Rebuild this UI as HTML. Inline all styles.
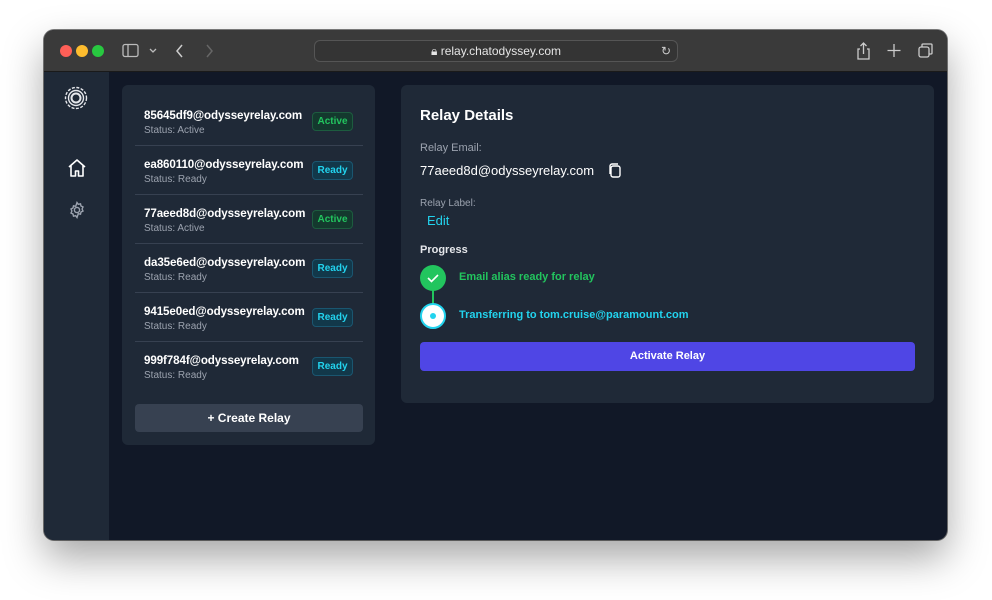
<!DOCTYPE html>
<html><head><meta charset="utf-8"><style>
*{box-sizing:border-box;margin:0;padding:0}
body{width:992px;height:600px;background:#fff;font-family:"Liberation Sans",Arial,sans-serif;position:relative;overflow:hidden}
.win{position:absolute;left:44px;top:30px;width:903px;height:510px;border-radius:10px;overflow:hidden;background:#111827;box-shadow:0 18px 40px rgba(0,0,0,.35),0 0 0 1px rgba(0,0,0,.5)}
.tb{position:absolute;left:0;top:0;width:903px;height:42px;background:#3a3a3a;border-bottom:1px solid #1a1a1a}
.dot{position:absolute;top:15px;width:12px;height:12px;border-radius:50%}
.url{position:absolute;left:270px;top:10px;width:364px;height:22px;border:1px solid #555;border-radius:6px;background:#343434;color:#e5e5e5;font-size:12px;text-align:center;line-height:21px}
.side{position:absolute;left:0;top:42px;width:65px;height:468px;background:#1f2937}
.card{position:absolute;background:#1f2937;border-radius:6px}
.row{position:absolute;left:13px;width:228px;height:49px;border-bottom:1px solid #374151}
.em{position:absolute;left:9px;top:12px;color:#fff;font-weight:bold;font-size:11.6px;letter-spacing:-0.1px}
.st{position:absolute;left:9px;top:28px;color:#9ca3af;font-size:10px}
.bd{position:absolute;left:177px;top:15px;width:41px;height:19px;border-radius:4px;font-size:10px;font-weight:bold;text-align:center;line-height:17px}
.ac{background:#14392e;border:1px solid #1d5c3f;color:#22c55e}
.rd{background:#12384a;border:1px solid #1a5670;color:#22d3ee}
.t{position:absolute;white-space:nowrap}
</style></head><body>
<div class="win">
 <div class="tb">
  <div class="dot" style="left:16px;background:#fe5f57"></div>
  <div class="dot" style="left:32px;background:#febc2e"></div>
  <div class="dot" style="left:48px;background:#28c840"></div>
  <svg style="position:absolute;left:78px;top:13px" width="40" height="16" fill="none" stroke="#bbb" stroke-width="1.3"><rect x="1" y="1.5" width="15" height="12" rx="2"/><line x1="6" y1="2" x2="6" y2="13"/><path d="M28 6l3 3 3-3"/></svg>
  <svg style="position:absolute;left:130px;top:13px" width="40" height="16" fill="none" stroke-width="1.5"><path d="M8 2l-5 6 5 6" stroke="#ccc"/><path d="M33 2l5 6-5 6" stroke="#666"/></svg>
  <div class="url">🔒︎ relay.chatodyssey.com<span style="position:absolute;right:6px;color:#ccc">↻</span></div>
  <svg style="position:absolute;left:812px;top:11px" width="80" height="20" fill="none" stroke="#ccc" stroke-width="1.3"><path d="M4 8H2v10h11V8h-2M7.5 13V2M4.5 5l3-3 3 3"/><path d="M38 3v13M31.5 9.5h13"/><rect x="63" y="6" width="10" height="10" rx="2"/><path d="M66 6V4a1 1 0 011-1h8a1 1 0 011 1v8a1 1 0 01-1 1h-2"/></svg>
 </div>
 <div class="side">
  <svg style="position:absolute;left:20px;top:14px" width="26" height="26" fill="none" stroke="#e5e7eb" stroke-width="1.4"><circle cx="12" cy="12" r="10.5" stroke-dasharray="3 1.5"/><circle cx="12" cy="12" r="7.5"/><circle cx="12" cy="12" r="4.5" stroke-width="2"/></svg>
  <svg style="position:absolute;left:23px;top:86px" width="20" height="20" fill="none" stroke="#fff" stroke-width="1.6" stroke-linejoin="round"><path d="M2 9l8-7 8 7M4 7.5V18h4.5v-5h3v5H16V7.5"/></svg>
  <svg style="position:absolute;left:24px;top:129px" width="18" height="18" fill="none" stroke="#9ca3af" stroke-width="1.4"><circle cx="9" cy="9" r="2.6"/><path d="M9 1.5l1.3 1.8 2.2-.5.5 2.2 2 1-.9 2 .9 2-2 1-.5 2.2-2.2-.5L9 16.5l-1.3-1.8-2.2.5-.5-2.2-2-1 .9-2-.9-2 2-1 .5-2.2 2.2.5z"/></svg>
 </div>
 <div class="card" style="left:78px;top:55px;width:253px;height:360px">
  <div class="row" style="top:12px"><div class="em">85645df9@odysseyrelay.com</div><div class="st">Status: Active</div><div class="bd ac">Active</div></div>
  <div class="row" style="top:61px"><div class="em">ea860110@odysseyrelay.com</div><div class="st">Status: Ready</div><div class="bd rd">Ready</div></div>
  <div class="row" style="top:110px"><div class="em">77aeed8d@odysseyrelay.com</div><div class="st">Status: Active</div><div class="bd ac">Active</div></div>
  <div class="row" style="top:159px"><div class="em">da35e6ed@odysseyrelay.com</div><div class="st">Status: Ready</div><div class="bd rd">Ready</div></div>
  <div class="row" style="top:208px"><div class="em">9415e0ed@odysseyrelay.com</div><div class="st">Status: Ready</div><div class="bd rd">Ready</div></div>
  <div class="row" style="top:257px;border-bottom:none"><div class="em">999f784f@odysseyrelay.com</div><div class="st">Status: Ready</div><div class="bd rd">Ready</div></div>
  <div style="position:absolute;left:13px;top:319px;width:228px;height:28px;background:#374151;border-radius:4px;color:#fff;font-weight:bold;font-size:12px;text-align:center;line-height:28px">+ Create Relay</div>
 </div>
 <div class="card" style="left:357px;top:55px;width:533px;height:318px">
  <div class="t" style="left:19px;top:22px;color:#fff;font-weight:bold;font-size:15px">Relay Details</div>
  <div class="t" style="left:19px;top:57px;color:#9ca3af;font-size:11px">Relay Email:</div>
  <div class="t" style="left:19px;top:78px;color:#fff;font-size:13px">77aeed8d@odysseyrelay.com</div>
  <svg style="position:absolute;left:207px;top:78px" width="14" height="16" fill="none" stroke="#fff" stroke-width="1.4"><rect x="3" y="3" width="9" height="11" rx="2"/><path d="M2 11V3a2 2 0 012-2h6"/></svg>
  <div class="t" style="left:19px;top:113px;color:#9ca3af;font-size:10px">Relay Label:</div>
  <div class="t" style="left:26px;top:128px;color:#22d3ee;font-size:13px">Edit</div>
  <div class="t" style="left:19px;top:159px;color:#e5e7eb;font-weight:bold;font-size:11px">Progress</div>
  <div style="position:absolute;left:31px;top:200px;width:2px;height:20px;background:#22c55e"></div>
  <div style="position:absolute;left:19px;top:180px;width:26px;height:26px;border-radius:50%;background:#22c55e"></div>
  <svg style="position:absolute;left:19px;top:180px" width="26" height="26" fill="none" stroke="#fff" stroke-width="1.6"><path d="M8 13l3.5 3.5L18 10"/></svg>
  <div class="t" style="left:58px;top:186px;color:#22c55e;font-weight:bold;font-size:11px">Email alias ready for relay</div>
  <div style="position:absolute;left:19px;top:218px;width:26px;height:26px;border-radius:50%;background:#fff;border:2px solid #22d3ee"></div>
  <div style="position:absolute;left:29px;top:228px;width:6px;height:6px;border-radius:50%;background:#22d3ee"></div>
  <div class="t" style="left:58px;top:224px;color:#22d3ee;font-weight:bold;font-size:11px">Transferring to tom.cruise@paramount.com</div>
  <div style="position:absolute;left:19px;top:257px;width:495px;height:29px;background:#4f46e5;border-radius:4px;color:#fff;font-weight:bold;font-size:11px;text-align:center;line-height:29px">Activate Relay</div>
 </div>
</div>
</body></html>
